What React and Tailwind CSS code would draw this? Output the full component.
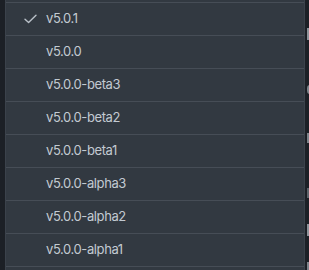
const versions = [
  'v5.0.1',
  'v5.0.0',
  'v5.0.0-beta3',
  'v5.0.0-beta2',
  'v5.0.0-beta1',
  'v5.0.0-alpha3',
  'v5.0.0-alpha2',
  'v5.0.0-alpha1',
]

function Check() {
  return (
    <svg width="13" height="10" viewBox="0 0 13 10" fill="none">
      <path d="M1 5.2 L4.6 8.6 L12 1.2" stroke="#b9c0c8" strokeWidth="1.4" strokeLinecap="round" strokeLinejoin="round" />
    </svg>
  )
}

export default function App() {
  return (
    <div className="flex h-[270px] w-[309px] overflow-hidden bg-[#1c2026] font-['Inter',sans-serif]">
      <div className="w-[5px] shrink-0 bg-[#1c2026]" />
      <div className="w-[300px] shrink-0 border-x border-[#3b424b] bg-[#323941]">
        <div className="h-[3px] border-b border-[#464d56]" />
        {versions.map((v, i) => (
          <div key={v} className="flex h-[33px] items-center border-b border-[#464d56] pl-[18px]">
            <span className="flex w-[22px] justify-start">{i === 0 && <Check />}</span>
            <span className="text-[13px] tracking-[-0.4px] text-[#c3cad2]">{v}</span>
          </div>
        ))}
      </div>
      <div className="flex flex-1 flex-col pl-[2px]">
        <div className="mt-[28px] h-[12px] w-[3px] bg-[#8d939a]" />
        <div className="mt-[45px] h-[9px] w-[3px] rounded-l-full bg-[#7d838a]" />
        <div className="mt-[39px] h-[10px] w-[3px] bg-[#7d838a]" />
        <div className="mt-[45px] h-[11px] w-[3px] bg-[#5d636a]" />
        <div className="mt-[26px] h-[12px] w-[3px] bg-[#8d939a]" />
        <div className="mt-[26px] h-[8px] w-[3px] bg-[#7d838a]" />
      </div>
    </div>
  )
}
